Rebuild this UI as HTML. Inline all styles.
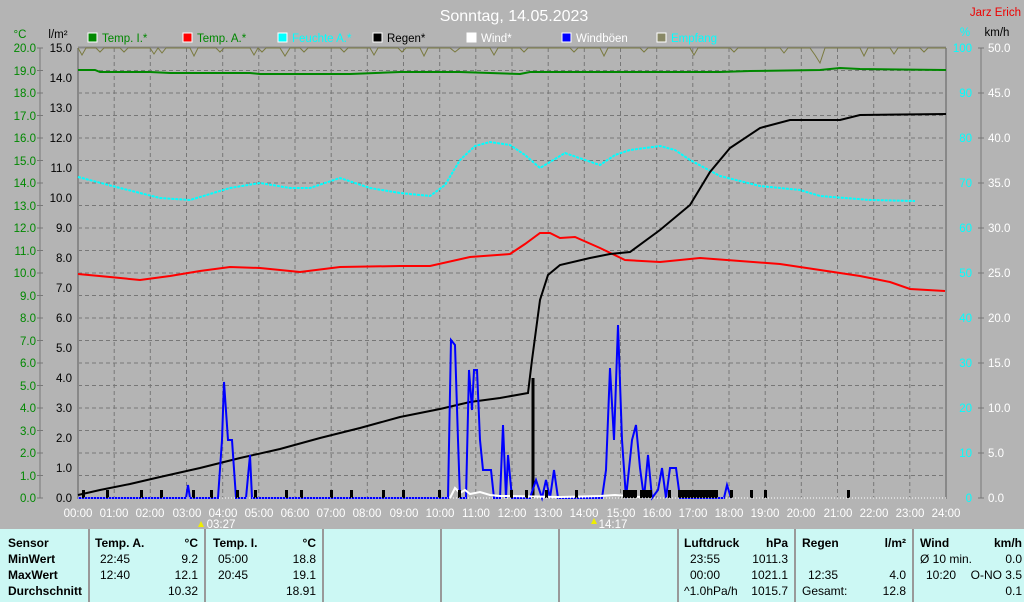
<!DOCTYPE html>
<html><head><meta charset="utf-8"><style>
body{margin:0;width:1024px;height:602px;background:#b4b4b4;font-family:"Liberation Sans",sans-serif;overflow:hidden;position:relative}
svg{position:absolute;left:0;top:0}
.tbl{position:absolute;left:0;top:529px;width:1024px;height:73px;background:#ccf8f4}
.c{position:absolute;top:0;height:73px;border-right:2px solid #999;font-size:12px;color:#000}
.c div{position:absolute;white-space:nowrap}
b{font-weight:bold}
</style></head><body>
<svg width="1024" height="602" font-family="Liberation Sans" font-size="11.5">
<text x="514" y="21" fill="#fff" font-size="16" text-anchor="middle">Sonntag, 14.05.2023</text>
<text x="1021" y="16" fill="#e00" text-anchor="end">Jarz Erich</text>
<text x="20" y="38" fill="#080" text-anchor="middle">°C</text>
<text x="58" y="38" fill="#000" text-anchor="middle">l/m²</text>
<text x="965" y="36" fill="#0ff" text-anchor="middle">%</text>
<text x="997" y="36" fill="#000" text-anchor="middle">km/h</text>
<g font-size="11.5">
<rect x="88" y="33" width="9" height="9" fill="#080" stroke="#fff"/><text x="102" y="42" fill="#080">Temp. I.*</text>
<rect x="183" y="33" width="9" height="9" fill="#f00" stroke="#fff"/><text x="197" y="42" fill="#080">Temp. A.*</text>
<rect x="278" y="33" width="9" height="9" fill="#0ff" stroke="#fff"/><text x="292" y="42" fill="#0ff">Feuchte A.*</text>
<rect x="373" y="33" width="9" height="9" fill="#000" stroke="#fff"/><text x="387" y="42" fill="#000">Regen*</text>
<rect x="467" y="33" width="9" height="9" fill="#fff" stroke="#fff"/><text x="481" y="42" fill="#fff">Wind*</text>
<rect x="562" y="33" width="9" height="9" fill="#00f" stroke="#fff"/><text x="576" y="42" fill="#fff">Windböen</text>
<rect x="657" y="33" width="9" height="9" fill="#886" stroke="#fff"/><text x="671" y="42" fill="#0ff">Empfang</text>
</g>
<g stroke="#777" stroke-dasharray="4,3" stroke-width="1">
<path d="M78 70.5H946M78 93H946M78 115.5H946M78 138H946M78 160.5H946M78 183H946M78 205.5H946M78 228H946M78 250.5H946M78 273H946M78 295.5H946M78 318H946M78 340.5H946M78 363H946M78 385.5H946M78 408H946M78 430.5H946M78 453H946M78 475.5H946"/>
<path d="M114.2 48V498M150.3 48V498M186.5 48V498M222.7 48V498M258.8 48V498M295 48V498M331.2 48V498M367.3 48V498M403.5 48V498M439.7 48V498M475.8 48V498M512 48V498M548.2 48V498M584.3 48V498M620.5 48V498M656.7 48V498M692.8 48V498M729 48V498M765.2 48V498M801.3 48V498M837.5 48V498M873.7 48V498M909.8 48V498"/>
</g>
<path d="M78 48V499M946 48V499M78 47.5H946" stroke="#888" stroke-width="2" fill="none"/>
<path d="M40 48V498M37 48h6M37 70.5h6M37 93h6M37 115.5h6M37 138h6M37 160.5h6M37 183h6M37 205.5h6M37 228h6M37 250.5h6M37 273h6M37 295.5h6M37 318h6M37 340.5h6M37 363h6M37 385.5h6M37 408h6M37 430.5h6M37 453h6M37 475.5h6M37 498h6" stroke="#777" fill="none"/>
<path d="M981 48V498M978 48h6M978 93h6M978 138h6M978 183h6M978 228h6M978 273h6M978 318h6M978 363h6M978 408h6M978 453h6M978 498h6" stroke="#777" fill="none"/>
<g fill="#080" text-anchor="end">
<text x="36" y="52">20.0</text><text x="36" y="75">19.0</text><text x="36" y="97">18.0</text><text x="36" y="120">17.0</text><text x="36" y="142">16.0</text><text x="36" y="165">15.0</text><text x="36" y="187">14.0</text><text x="36" y="210">13.0</text><text x="36" y="232">12.0</text><text x="36" y="255">11.0</text><text x="36" y="277">10.0</text><text x="36" y="300">9.0</text><text x="36" y="322">8.0</text><text x="36" y="345">7.0</text><text x="36" y="367">6.0</text><text x="36" y="390">5.0</text><text x="36" y="412">4.0</text><text x="36" y="435">3.0</text><text x="36" y="457">2.0</text><text x="36" y="480">1.0</text><text x="36" y="502">0.0</text>
</g>
<g fill="#000" text-anchor="end">
<text x="72" y="52">15.0</text><text x="72" y="82">14.0</text><text x="72" y="112">13.0</text><text x="72" y="142">12.0</text><text x="72" y="172">11.0</text><text x="72" y="202">10.0</text><text x="72" y="232">9.0</text><text x="72" y="262">8.0</text><text x="72" y="292">7.0</text><text x="72" y="322">6.0</text><text x="72" y="352">5.0</text><text x="72" y="382">4.0</text><text x="72" y="412">3.0</text><text x="72" y="442">2.0</text><text x="72" y="472">1.0</text><text x="72" y="502">0.0</text>
</g>
<g fill="#0ff" text-anchor="end">
<text x="972" y="52">100</text><text x="972" y="97">90</text><text x="972" y="142">80</text><text x="972" y="187">70</text><text x="972" y="232">60</text><text x="972" y="277">50</text><text x="972" y="322">40</text><text x="972" y="367">30</text><text x="972" y="412">20</text><text x="972" y="457">10</text><text x="972" y="502">0</text>
</g>
<g fill="#fff">
<text x="988" y="52">50.0</text><text x="988" y="97">45.0</text><text x="988" y="142">40.0</text><text x="988" y="187">35.0</text><text x="988" y="232">30.0</text><text x="988" y="277">25.0</text><text x="988" y="322">20.0</text><text x="988" y="367">15.0</text><text x="988" y="412">10.0</text><text x="988" y="457">5.0</text><text x="988" y="502">0.0</text>
</g>
<g fill="#fff" text-anchor="middle">
<text x="78" y="517">00:00</text><text x="114" y="517">01:00</text><text x="150" y="517">02:00</text><text x="187" y="517">03:00</text><text x="223" y="517">04:00</text><text x="259" y="517">05:00</text><text x="295" y="517">06:00</text><text x="331" y="517">07:00</text><text x="367" y="517">08:00</text><text x="404" y="517">09:00</text><text x="440" y="517">10:00</text><text x="476" y="517">11:00</text><text x="512" y="517">12:00</text><text x="548" y="517">13:00</text><text x="584" y="517">14:00</text><text x="621" y="517">15:00</text><text x="657" y="517">16:00</text><text x="693" y="517">17:00</text><text x="729" y="517">18:00</text><text x="765" y="517">19:00</text><text x="801" y="517">20:00</text><text x="838" y="517">21:00</text><text x="874" y="517">22:00</text><text x="910" y="517">23:00</text><text x="946" y="517">24:00</text>
<text x="221" y="528">03:27</text><text x="613" y="528">14:17</text>
</g>
<path d="M201 521l3 6h-6z" fill="#ee0"/><path d="M594 518l3 6h-6z" fill="#ee0"/>
<polyline fill="none" stroke="#7a7a40" points="78,48 82,55 86,48 96,48 100,52 104,48 120,48 124,52 128,48 150,48 154,54 158,48 162,53 166,48 190,48 194,56 198,48 216,48 220,52 224,48 250,48 254,55 258,48 262,52 266,48 280,48 285,56 290,48 300,48 304,52 308,48 340,48 344,52 348,48 370,48 374,55 378,48 398,48 402,52 406,48 420,48 424,56 428,48 450,48 455,52 460,48 490,48 494,55 498,48 520,48 524,52 528,48 570,48 574,52 578,48 600,48 604,56 608,48 640,48 644,52 648,48 690,48 694,55 698,48 730,48 734,52 738,48 780,48 784,53 788,48 810,48 815,55 820,63 825,48 860,48 864,56 868,48 890,48 894,54 898,48 920,48 924,52 928,48 946,48"/>
<polyline fill="none" stroke="#080" stroke-width="2" points="78,70 95,70 100,72 150,72 170,73 250,73 260,74 300,74 350,74 400,72 460,72 490,73 520,74 530,72 600,72 720,72 750,71 820,70 840,68 860,69 946,70"/>
<polyline fill="none" stroke="#0ff" stroke-width="2" stroke-dasharray="3,1" points="78,177 120,188 160,198 190,200 230,188 260,183 290,188 310,188 340,178 370,188 400,193 430,196 445,185 460,160 475,146 490,142 510,145 525,155 540,168 565,153 585,160 600,165 615,155 630,150 660,146 675,150 690,160 720,176 760,186 800,190 820,196 870,200 915,201"/>
<polyline fill="none" stroke="#f00" stroke-width="2" points="78,274 110,277 140,280 170,276 200,271 230,267 260,268 300,272 340,267 400,266 430,266 470,257 510,254 525,244 540,233 550,233 560,238 575,237 600,248 625,260 660,262 700,258 740,261 780,264 820,270 860,276 890,282 910,289 945,291"/>
<polyline fill="none" stroke="#000" stroke-width="2" points="78,495 100,490 130,484 160,477 200,468 240,458 280,449 320,438 360,428 400,417 440,409 470,402 500,398 528,393 532,360 540,300 548,275 560,265 590,258 610,254 630,252 660,230 690,205 710,172 730,148 760,128 790,120 840,120 860,115 946,114"/>
<path d="M533 378V498" stroke="#000" stroke-width="3"/>
<polyline fill="none" stroke="#00f" stroke-width="2" points="78,498 186,498 188,485 190,498 218,498 222,440 224,382 228,440 232,440 236,498 246,498 250,455 252,498 448,498 451,340 455,345 458,440 460,498 466,498 469,370 472,410 474,370 477,370 480,440 483,470 487,470 491,470 494,498 500,498 503,425 506,498 508,455 512,498 530,498 536,480 542,498 546,480 550,498 554,470 558,498 602,498 606,470 610,368 614,440 618,325 622,440 626,498 632,440 636,425 640,468 644,498 648,455 652,498 658,490 662,468 666,498 670,468 676,468 680,498 724,498 727,485 731,498"/>
<polyline fill="none" stroke="#fff" stroke-width="2" points="450,498 455,488 460,493 465,490 470,494 480,492 490,495 500,496 510,496 560,497 600,496 615,495 640,497"/>
<g fill="#000"><rect x="82" y="490" width="3" height="8"/><rect x="106" y="490" width="3" height="8"/><rect x="140" y="490" width="3" height="8"/><rect x="160" y="490" width="3" height="8"/><rect x="192" y="490" width="3" height="8"/><rect x="210" y="490" width="3" height="8"/><rect x="236" y="490" width="3" height="8"/><rect x="254" y="490" width="3" height="8"/><rect x="285" y="490" width="3" height="8"/><rect x="300" y="490" width="3" height="8"/><rect x="330" y="490" width="3" height="8"/><rect x="350" y="490" width="3" height="8"/><rect x="382" y="490" width="3" height="8"/><rect x="402" y="490" width="3" height="8"/><rect x="438" y="490" width="3" height="8"/><rect x="458" y="490" width="3" height="8"/><rect x="510" y="490" width="3" height="8"/><rect x="525" y="490" width="3" height="8"/><rect x="545" y="490" width="3" height="8"/><rect x="575" y="490" width="3" height="8"/><rect x="623" y="490" width="14" height="8"/><rect x="640" y="490" width="12" height="8"/><rect x="668" y="490" width="3" height="8"/><rect x="678" y="490" width="40" height="8"/><rect x="730" y="490" width="3" height="8"/><rect x="750" y="490" width="3" height="8"/><rect x="764" y="490" width="3" height="8"/><rect x="847" y="490" width="3" height="8"/></g>
<path d="M78 498H946" stroke="#fff" stroke-dasharray="1,2"/>
</svg>
<div class="tbl">
<div class="c" style="left:0;width:88px"><div style="left:8px;top:7px"><b>Sensor</b></div><div style="left:8px;top:23px"><b>MinWert</b></div><div style="left:8px;top:39px"><b>MaxWert</b></div><div style="left:8px;top:55px"><b>Durchschnitt</b></div></div>
<div class="c" style="left:90px;width:114px"><div style="left:5px;top:7px"><b>Temp. A.</b></div><div style="right:6px;top:7px"><b>°C</b></div><div style="left:10px;top:23px">22:45</div><div style="right:6px;top:23px">9.2</div><div style="left:10px;top:39px">12:40</div><div style="right:6px;top:39px">12.1</div><div style="right:6px;top:55px">10.32</div></div>
<div class="c" style="left:206px;width:116px"><div style="left:7px;top:7px"><b>Temp. I.</b></div><div style="right:6px;top:7px"><b>°C</b></div><div style="left:12px;top:23px">05:00</div><div style="right:6px;top:23px">18.8</div><div style="left:12px;top:39px">20:45</div><div style="right:6px;top:39px">19.1</div><div style="right:6px;top:55px">18.91</div></div>
<div class="c" style="left:324px;width:116px"></div>
<div class="c" style="left:442px;width:116px"></div>
<div class="c" style="left:560px;width:117px"></div>
<div class="c" style="left:679px;width:115px"><div style="left:5px;top:7px"><b>Luftdruck</b></div><div style="right:6px;top:7px"><b>hPa</b></div><div style="left:11px;top:23px">23:55</div><div style="right:6px;top:23px">1011.3</div><div style="left:11px;top:39px">00:00</div><div style="right:6px;top:39px">1021.1</div><div style="left:5px;top:55px">^1.0hPa/h</div><div style="right:6px;top:55px">1015.7</div></div>
<div class="c" style="left:796px;width:116px"><div style="left:6px;top:7px"><b>Regen</b></div><div style="right:6px;top:7px"><b>l/m²</b></div><div style="left:12px;top:39px">12:35</div><div style="right:6px;top:39px">4.0</div><div style="left:6px;top:55px">Gesamt:</div><div style="right:6px;top:55px">12.8</div></div>
<div class="c" style="left:914px;width:110px;border:none"><div style="left:6px;top:7px"><b>Wind</b></div><div style="right:2px;top:7px"><b>km/h</b></div><div style="left:6px;top:23px">Ø 10 min.</div><div style="right:2px;top:23px">0.0</div><div style="left:12px;top:39px">10:20</div><div style="right:2px;top:39px">O-NO 3.5</div><div style="right:2px;top:55px">0.1</div></div>
</div>
</body></html>
